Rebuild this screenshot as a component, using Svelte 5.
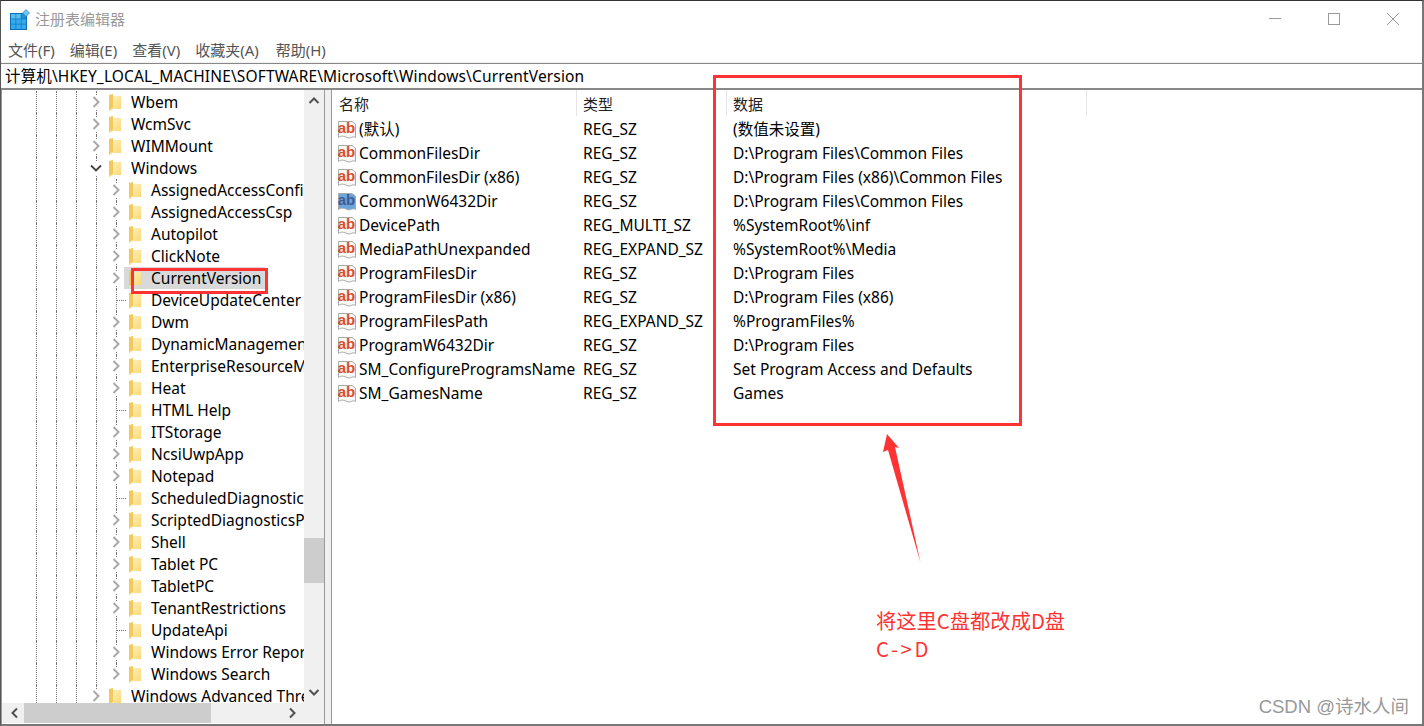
<script>
  const tree = [
    { name: "Wbem", level: 0, kid: "closed" },
    { name: "WcmSvc", level: 0, kid: "closed" },
    { name: "WIMMount", level: 0, kid: "closed" },
    { name: "Windows", level: 0, kid: "open" },
    { name: "AssignedAccessConfiguration", level: 1, kid: "closed" },
    { name: "AssignedAccessCsp", level: 1, kid: "closed" },
    { name: "Autopilot", level: 1, kid: "closed" },
    { name: "ClickNote", level: 1, kid: "closed" },
    { name: "CurrentVersion", level: 1, kid: "closed", selected: true },
    { name: "DeviceUpdateCenter", level: 1 },
    { name: "Dwm", level: 1, kid: "closed" },
    { name: "DynamicManagement", level: 1, kid: "closed" },
    { name: "EnterpriseResourceManager", level: 1, kid: "closed" },
    { name: "Heat", level: 1, kid: "closed" },
    { name: "HTML Help", level: 1 },
    { name: "ITStorage", level: 1, kid: "closed" },
    { name: "NcsiUwpApp", level: 1, kid: "closed" },
    { name: "Notepad", level: 1, kid: "closed" },
    { name: "ScheduledDiagnostics", level: 1 },
    { name: "ScriptedDiagnosticsProvider", level: 1, kid: "closed" },
    { name: "Shell", level: 1, kid: "closed" },
    { name: "Tablet PC", level: 1, kid: "closed" },
    { name: "TabletPC", level: 1, kid: "closed" },
    { name: "TenantRestrictions", level: 1, kid: "closed" },
    { name: "UpdateApi", level: 1 },
    { name: "Windows Error Reporting", level: 1, kid: "closed" },
    { name: "Windows Search", level: 1, kid: "closed", end: true },
    { name: "Windows Advanced Threat Protection", level: 0, kid: "closed", end: true }
  ];

  const values = [
    ["(默认)", "REG_SZ", "(数值未设置)"],
    ["CommonFilesDir", "REG_SZ", "D:\\Program Files\\Common Files"],
    ["CommonFilesDir (x86)", "REG_SZ", "D:\\Program Files (x86)\\Common Files"],
    ["CommonW6432Dir", "REG_SZ", "D:\\Program Files\\Common Files", true],
    ["DevicePath", "REG_MULTI_SZ", "%SystemRoot%\\inf"],
    ["MediaPathUnexpanded", "REG_EXPAND_SZ", "%SystemRoot%\\Media"],
    ["ProgramFilesDir", "REG_SZ", "D:\\Program Files"],
    ["ProgramFilesDir (x86)", "REG_SZ", "D:\\Program Files (x86)"],
    ["ProgramFilesPath", "REG_EXPAND_SZ", "%ProgramFiles%"],
    ["ProgramW6432Dir", "REG_SZ", "D:\\Program Files"],
    ["SM_ConfigureProgramsName", "REG_SZ", "Set Program Access and Defaults"],
    ["SM_GamesName", "REG_SZ", "Games"]
  ];

  const menus = ["文件(F)", "编辑(E)", "查看(V)", "收藏夹(A)", "帮助(H)"];
</script>

<div class="win">
  <header class="title">
    <svg class="logo" width="20" height="21" viewBox="0 0 20 21">
      <rect x="0" y="4" width="17" height="17" fill="#0b6fb8" />
      <g fill="#35a9ea">
        <rect x="1" y="5" width="4.6" height="4.6" fill="#58bdf0" />
        <rect x="6.2" y="5" width="4.6" height="4.6" fill="#58bdf0" />
        <rect x="11.4" y="5" width="4.6" height="4.6" fill="#1f8fd6" />
        <rect x="1" y="10.2" width="4.6" height="4.6" />
        <rect x="6.2" y="10.2" width="4.6" height="4.6" />
        <rect x="11.4" y="10.2" width="4.6" height="4.6" />
        <rect x="1" y="15.4" width="4.6" height="4.6" />
        <rect x="6.2" y="15.4" width="4.6" height="4.6" />
        <rect x="11.4" y="15.4" width="4.6" height="4.6" />
      </g>
      <path d="M16 0.5 19.5 4 16 7.5 12.5 4Z" fill="#6cc6f0" stroke="#2a7fb8" stroke-width=".7" />
    </svg>
    <span class="title-text">注册表编辑器</span>
    <div class="caps">
      <svg width="14" height="14" viewBox="0 0 14 14"><path d="M1 6.5H13" stroke="#999" stroke-width="1" /></svg>
      <svg width="14" height="14" viewBox="0 0 14 14"><rect x="1.5" y="1.5" width="11" height="11" fill="none" stroke="#999" stroke-width="1" /></svg>
      <svg width="14" height="14" viewBox="0 0 14 14"><path d="M1 1 13 13M13 1 1 13" stroke="#999" stroke-width="1" /></svg>
    </div>
  </header>

  <nav class="menu">
    {#each menus as m}<span>{m}</span>{/each}
  </nav>

  <div class="address">计算机\HKEY_LOCAL_MACHINE\SOFTWARE\Microsoft\Windows\CurrentVersion</div>

  <div class="panes">
    <aside class="tree-pane">
      <div class="tree-top">
        <div class="tree">
          {#each tree as row}
            <div class="row">
              {#each Array(3 + row.level) as _}<span class="guide"></span>{/each}
              <span class="twist" class:no-line={row.end}>
                {#if row.kid === "closed"}
                  <svg width="14" height="14" viewBox="0 0 14 14"><rect width="14" height="14" fill="#fff" /><path d="M4.5 2 9.5 7 4.5 12" fill="none" stroke="#a8a8a8" stroke-width="2" /></svg>
                {:else if row.kid === "open"}
                  <svg width="14" height="14" viewBox="0 0 14 14"><rect width="14" height="14" fill="#fff" /><path d="M2 4.5 7 9.5 12 4.5" fill="none" stroke="#404040" stroke-width="1.8" /></svg>
                {:else}
                  <span class="stub"></span>
                {/if}
              </span>
              <span class="item" class:selected={row.selected}>
                <svg class="folder" width="12" height="17" viewBox="0 0 12 17">
                  <defs>
                    <linearGradient id="fold" x1="0" y1="0" x2="1" y2="1">
                      <stop offset="0" stop-color="#fff3c6" />
                      <stop offset="1" stop-color="#f9d670" />
                    </linearGradient>
                  </defs>
                  <path d="M0 1 4 0V14L0 16.5Z" fill="#f3c95c" />
                  <path d="M4 2H12V15H4L1 17H0V16L4 14Z" fill="url(#fold)" />
                </svg>
                <span class="label">{row.name}</span>
              </span>
            </div>
          {/each}
        </div>
        <div class="vbar">
          <svg width="20" height="16" viewBox="0 0 20 16"><path d="M5.5 10 10 5.5 14.5 10" fill="none" stroke="#505050" stroke-width="2" /></svg>
          <div class="vthumb"></div>
          <svg width="20" height="16" viewBox="0 0 20 16"><path d="M5.5 6 10 10.5 14.5 6" fill="none" stroke="#505050" stroke-width="2" /></svg>
        </div>
      </div>
      <div class="hbar">
        <svg width="22" height="20" viewBox="0 0 22 20"><path d="M15 5.5 10.5 10 15 14.5" fill="none" stroke="#505050" stroke-width="2" /></svg>
        <div class="htrack"><div class="hthumb"></div></div>
        <svg width="20" height="20" viewBox="0 0 20 20"><path d="M6 5.5 10.5 10 6 14.5" fill="none" stroke="#505050" stroke-width="2" /></svg>
      </div>
    </aside>

    <section class="list">
      <div class="head">
        <span class="h1">名称</span>
        <span class="h2">类型</span>
        <span class="h3">数据</span>
      </div>
      {#each values as v}
        <div class="vrow">
          <span class="name">
            <svg class="ab" width="20" height="20" viewBox="0 0 20 20">
              <path d="M1.5 1.5H15L18.5 4V17.5C16 15.5 13 19 10 17.5S4 15.5 1.5 17.5Z" fill={v[3] ? "#6aa6dc" : "#f8f8f8"} stroke="#a9a9a9" />
              <text x="9.5" y="13" text-anchor="middle" class="ab-text" fill={v[3] ? "#3f5c96" : "#d9502e"}>ab</text>
            </svg>
            <span class="name-text">{v[0]}</span>
          </span>
          <span class="type">{v[1]}</span>
          <span class="data">{v[2]}</span>
        </div>
      {/each}
    </section>
  </div>

  <div class="mark box-data"></div>
  <div class="mark box-node"></div>
  <svg class="arrow" width="50" height="140" viewBox="880 430 50 140">
    <path d="M887 434 899 448 895 447 920.6 563 888 450 883 452Z" fill="#f33" />
  </svg>
  <div class="note">将这里C盘都改成D盘<br /><span class="note-sub">C-&gt;D</span></div>
  <div class="watermark">CSDN @诗水人间</div>
</div>

<style>
  :global(body) {
    margin: 0;
    background: #fff;
  }
  .win {
    position: relative;
    width: 1424px;
    height: 726px;
    overflow: hidden;
    display: flex;
    flex-direction: column;
    box-sizing: border-box;
    background: #fff;
    border-top: 1px solid #333;
    border-left: 1px solid #555;
    border-right: 2px solid #777;
    border-bottom: 2px solid #777;
    font: 15.5px/22px "Noto Sans", "Noto Sans CJK SC", sans-serif;
    color: #000;
  }
  .title {
    height: 36px;
    display: flex;
    align-items: center;
    padding-left: 9px;
    font-size: 15px;
  }
  .logo {
    margin-right: 5px;
  }
  .title-text {
    color: #999;
  }
  .caps {
    margin-left: auto;
    display: flex;
    gap: 45px;
    padding-right: 22px;
  }
  .menu {
    height: 26px;
    display: flex;
    align-items: center;
    padding-left: 7px;
    gap: 15px;
    color: #555;
    background: #fff;
    font-size: 15px;
    box-shadow: inset 0 -1px 0 #f0f0f0;
  }
  .menu span:last-child {
    margin-left: 2px;
  }
  .address {
    height: 24px;
    line-height: 24px;
    padding-left: 4px;
    border-top: 1px solid #888;
    border-bottom: 2px solid #888;
    white-space: nowrap;
    letter-spacing: 0.14px;
  }
  .panes {
    flex: 1;
    min-height: 0;
    display: flex;
    gap: 6px;
    background: #f0f0f0;
  }
  .tree-pane {
    width: 324px;
    flex: none;
    display: flex;
    flex-direction: column;
    background: #fff;
    border-left: 1px solid #999;
    border-right: 1px solid #999;
    box-sizing: border-box;
  }
  .tree-top {
    flex: 1;
    min-height: 0;
    display: flex;
  }
  .tree {
    width: 302px;
    overflow: hidden;
    padding-left: 24px;
    box-sizing: border-box;
    padding-top: 1px;
  }
  .row {
    height: 22px;
    display: flex;
    white-space: nowrap;
  }
  .guide,
  .twist {
    position: relative;
    flex: none;
    width: 20px;
    height: 22px;
    display: flex;
    align-items: center;
    justify-content: center;
  }
  .guide::before,
  .twist::before {
    content: "";
    position: absolute;
    top: 0;
    bottom: 0;
    left: 10px;
    border-left: 1px dotted #777;
  }
  .twist.no-line::before {
    bottom: 12px;
  }
  .twist svg {
    position: relative;
  }
  .stub {
    position: absolute;
    left: 11px;
    top: 11px;
    width: 9px;
    border-top: 1px dotted #777;
  }
  .item {
    display: flex;
    align-items: center;
    height: 22px;
    padding-left: 3px;
    margin-left: -2px;
    padding-right: 4px;
  }
  .item.selected {
    background: #d9d9d9;
  }
  .folder {
    margin-right: 10px;
    margin-left: 2px;
    flex: none;
  }
  .vbar {
    width: 20px;
    flex: none;
    background: #f0f0f0;
    display: flex;
    flex-direction: column;
    justify-content: space-between;
    position: relative;
    padding: 3px 0;
    box-sizing: border-box;
  }
  .vthumb {
    position: absolute;
    left: 0;
    right: 0;
    top: 448px;
    height: 45px;
    background: #cdcdcd;
  }
  .hbar {
    height: 20px;
    flex: none;
    display: flex;
    background: #f0f0f0;
    margin-bottom: 1px;
    padding-right: 20px;
  }
  .htrack {
    flex: 1;
  }
  .hthumb {
    width: 187px;
    height: 20px;
    background: #cdcdcd;
  }
  .list {
    flex: 1;
    background: #fff;
    border-left: 1px solid #999;
    padding-left: 1px;
  }
  .head {
    display: grid;
    grid-template-columns: 244px 150px 360px;
    width: 754px;
    height: 27px;
    line-height: 28px;
    color: #222;
    font-size: 15px;
  }
  .head span {
    padding-left: 6px;
    border-right: 1px solid #e5e5e5;
    height: 26px;
    box-sizing: border-box;
  }
  .vrow {
    display: grid;
    grid-template-columns: 244px 150px 360px;
    height: 24px;
    line-height: 24px;
    white-space: nowrap;
  }
  .name {
    display: flex;
    align-items: center;
    gap: 2px;
    padding-left: 4px;
  }
  .ab {
    flex: none;
    margin-top: 2px;
  }
  .ab-text {
    font: bold 15px "Liberation Sans", sans-serif;
  }
  .type,
  .data {
    padding-left: 6px;
  }
  .mark {
    position: absolute;
    border: 3px solid #f33;
    box-sizing: border-box;
  }
  .box-data {
    left: 712px;
    top: 74px;
    width: 309px;
    height: 351px;
  }
  .box-node {
    left: 130px;
    top: 267px;
    width: 137px;
    height: 26px;
  }
  .arrow {
    position: absolute;
    left: 879px;
    top: 429px;
  }
  .note {
    position: absolute;
    left: 875px;
    top: 605px;
    color: #f33;
    font: 20.3px/28px "Noto Sans CJK SC", sans-serif;
  }
  .note-sub {
    letter-spacing: 2.6px;
  }
  .watermark {
    position: absolute;
    right: 13px;
    top: 695px;
    color: #999;
    font: 18.5px/22px "Liberation Sans", "Noto Sans CJK SC", sans-serif;
    white-space: nowrap;
  }
</style>
